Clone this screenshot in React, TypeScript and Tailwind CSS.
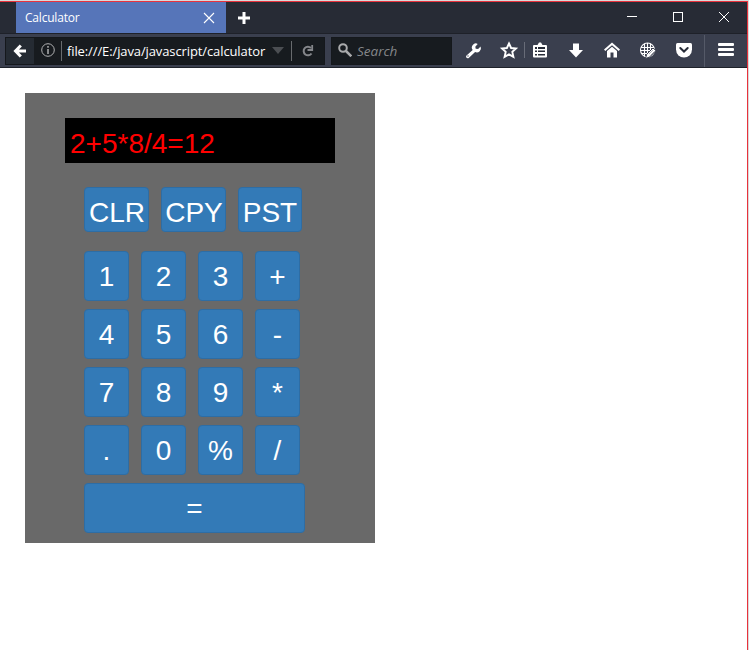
import React from "react";

const UI = "font-['Open_Sans','Noto_Sans',sans-serif]";

function Key({ label, className = "w-[45px] h-[50px] pt-0.5" }: { label: string; className?: string }) {
  return (
    <button
      className={`flex shrink-0 items-center justify-center rounded-[4px] border border-[#2e6da4] bg-[#337ab7] text-[28px] leading-[40px] text-white ${className}`}
    >
      {label}
    </button>
  );
}

function TitleBar() {
  return (
    <div className="flex h-[31px] shrink-0 bg-[#272b35] pl-4 text-white">
      <div className="flex w-[210px] items-center justify-between bg-[#5675b9] pl-[9px] pr-[11px]">
        <span className="pt-px text-[12px] leading-4 tracking-[-0.2px]">Calculator</span>
        <svg width="12" height="12" viewBox="0 0 12 12" stroke="#fff" strokeWidth="1.1">
          <path d="M1 1l10 10M11 1L1 11" />
        </svg>
      </div>
      <svg className="ml-[11px] mt-[9px]" width="14" height="14" viewBox="0 0 14 14" fill="#fff">
        <path d="M5.500 1h3v4.500h4.500v3H8.500V13h-3V8.500H1v-3h4.500z" />
      </svg>
      <div className="ml-auto flex items-start pt-[8px]">
        <svg width="130" height="16" viewBox="0 0 130 16" fill="none" stroke="#fff" shapeRendering="crispEdges">
          <path d="M10 6.500h10M56.500 2.500h9v9h-9z" />
          <path d="M102 2l10 10M112 2l-10 10" shapeRendering="auto" />
        </svg>
      </div>
    </div>
  );
}

function Toolbar() {
  return (
    <div className="flex h-[35px] shrink-0 items-center border-y border-t-[#1e2129] border-b-[#1e222a] bg-[#3a3f4e] pl-[5px]">
      <div className="flex h-7 w-[320px] items-center border border-[#15181c] bg-[#171b1f]">
        <div className="flex h-[26px] w-[28px] items-center justify-center bg-[#252b33]">
          <svg width="14" height="14" viewBox="0 0 14 14" fill="none" stroke="#fff" strokeWidth="3">
            <path d="M7.800 1.500L2.500 7l5.300 5.500M3 7h10" />
          </svg>
        </div>
        <svg className="-mt-px ml-[7px]" width="14" height="14" viewBox="0 0 14 14" fill="none" stroke="#b0b1b3">
          <circle cx="7" cy="7" r="6.300" />
          <path d="M7 6v5M7 3v1.700" strokeWidth="1.500" />
        </svg>
        <div className="ml-[6px] h-5 w-px bg-[#686b6e]" />
        <span className="ml-[5px] w-[200px] whitespace-nowrap pt-px text-[13px] leading-5 tracking-[-0.11px] text-white">
          file:///E:/java/javascript/calculator
        </span>
        <svg className="ml-[5px]" width="12" height="7" viewBox="0 0 12 7" fill="#4b4e52">
          <path d="M0 0h12L6 7z" />
        </svg>
        <div className="ml-[7px] h-5 w-px bg-[#686b6e]" />
        <svg className="ml-[10px]" width="12" height="12" viewBox="0 0 12 12" fill="none" stroke="#84868a" strokeWidth="2">
          <path d="M9 3A4.300 4.300 0 1 0 9.500 8.500" />
          <path d="M10.200 0v5H5.500" strokeWidth="1.800" />
        </svg>
      </div>
      <div className="ml-[6px] flex h-7 w-[121px] items-center border border-[#15181c] bg-[#171b1f] pl-[6px]">
        <svg className="-mt-0.5" width="14" height="14" viewBox="0 0 14 14" fill="none" stroke="#a9aaac" strokeWidth="2">
          <circle cx="5" cy="5" r="3.800" />
          <path d="M8 8l5.300 5.300" strokeWidth="2.500" />
        </svg>
        <span className="ml-[5px] pt-px text-[13.5px] italic leading-5 text-[#85878a]">Search</span>
      </div>
      <svg width="295" height="33" viewBox="452 33 295 33" fill="#fff">
        <path d="M466.500 54.500l6.200-5.600a4 4 0 0 1 5-6l-2.400 2.900.4 2 2.400.3 2.500-2.500a4.200 4.200 0 0 1-5.500 5.500l-6.100 5.600c-1.700 1.500-4-.7-2.500-2.200z" />
        <circle cx="468" cy="55" r=".7" fill="#3a3f4e" />
        <path
          d="M509 42.500l2.100 4.500 4.900.5-3.700 3.400 1.100 4.900-4.400-2.500-4.400 2.500 1.100-4.900-3.700-3.400 4.900-.5z"
          fill="none"
          stroke="#fff"
          strokeWidth="1.900"
        />
        <path d="M524 41h1v16h-1z" fill="#686c78" />
        <path d="M534 44h3.500l1.500-2.500h2l1.500 2.500h3.500q1 0 1 1v10.500q0 1-1 1h-12q-1 0-1-1V45q0-1 1-1z" />
        <path d="M535 46h2v2h-2zM538 46h7v2h-7zM535 49.500h2v1.500h-2zM538 49.500h7v1.500h-7zM535 53h2v1.500h-2zM538 53h7v1.500h-7z" fill="#272c38" />
        <path d="M573 42.500h6V49h4l-7 7.500-7-7.500h4z" />
        <path d="M612 41.500l8 7-1.300 1.500-6.700-5.800-6.700 5.800-1.300-1.500z" />
        <path d="M607 50l5-4.300 5 4.300v6.500h-3.500v-5h-3v5H607z" />
        <g fill="none" stroke="#fff" strokeWidth="1.100">
          <circle cx="647.500" cy="49" r="7" />
          <path d="M641 46.500h13M640.500 49.500h13M641.500 52.500h9M644.500 43v12M647.500 42v13M650.500 43v8" />
        </g>
        <path d="M645.500 57.500l1.200-4.200 6.300-6.300 3 2.700-6.300 6.300z" stroke="#3a3f4e" strokeWidth="1" />
        <path d="M649 53l4-4M650.500 54.500l4-4" stroke="#3a3f4e" strokeWidth=".4" />
        <path d="M676 43.500q0-1.500 1.500-1.500h13q1.500 0 1.500 1.500V48.500a8 8 0 0 1-16 0z" />
        <path d="M680.300 47l3.700 3.500 3.700-3.500" fill="none" stroke="#272c38" strokeWidth="2" strokeLinecap="round" />
        <path d="M704 34h1v32h-1z" fill="#555a68" />
        <rect x="718" y="42" width="16" height="3" rx="1" />
        <rect x="718" y="47" width="16" height="3" rx="1" />
        <rect x="718" y="52" width="16" height="3" rx="1" />
      </svg>
    </div>
  );
}

function Calculator() {
  return (
    <div className="ml-[25px] mt-[25px] h-[450px] w-[350px] bg-[#696969] pt-[25px] font-['Liberation_Sans',sans-serif]">
      <div className="mx-auto h-[45px] w-[270px] bg-black pl-[5px] pt-[6px] text-[28px] leading-[40px] text-[#f00]">
        2+5*8/4=12
      </div>
      <div className="ml-[59px] mt-6 flex gap-3">
        <Key label="CLR" className="h-[45px] w-[65px] pl-px pt-[7px]" />
        <Key label="CPY" className="h-[45px] w-[65px] pl-px pt-[7px]" />
        <Key label="PST" className="h-[45px] w-[64px] pt-[7px]" />
      </div>
      <div className="ml-[59px] mt-[19px] grid w-[216px] grid-cols-[repeat(4,45px)] gap-x-3 gap-y-2">
        {["1", "2", "3", "+", "4", "5", "6", "-", "7", "8", "9", "*", ".", "0", "%", "/"].map((k) => (
          <Key key={k} label={k} />
        ))}
      </div>
      <Key label="=" className="ml-[59px] mt-2 h-[50px] w-[221px] pt-0.5" />
    </div>
  );
}

export default function App() {
  return (
    <div className={`flex h-[650px] w-[749px] flex-col overflow-hidden bg-[#d9d9d9] pt-px ${UI}`}>
      <div className="flex h-[649px] w-[748px] flex-col border-r border-t border-[#e8323c] bg-white">
        <TitleBar />
        <Toolbar />
        <Calculator />
      </div>
    </div>
  );
}
